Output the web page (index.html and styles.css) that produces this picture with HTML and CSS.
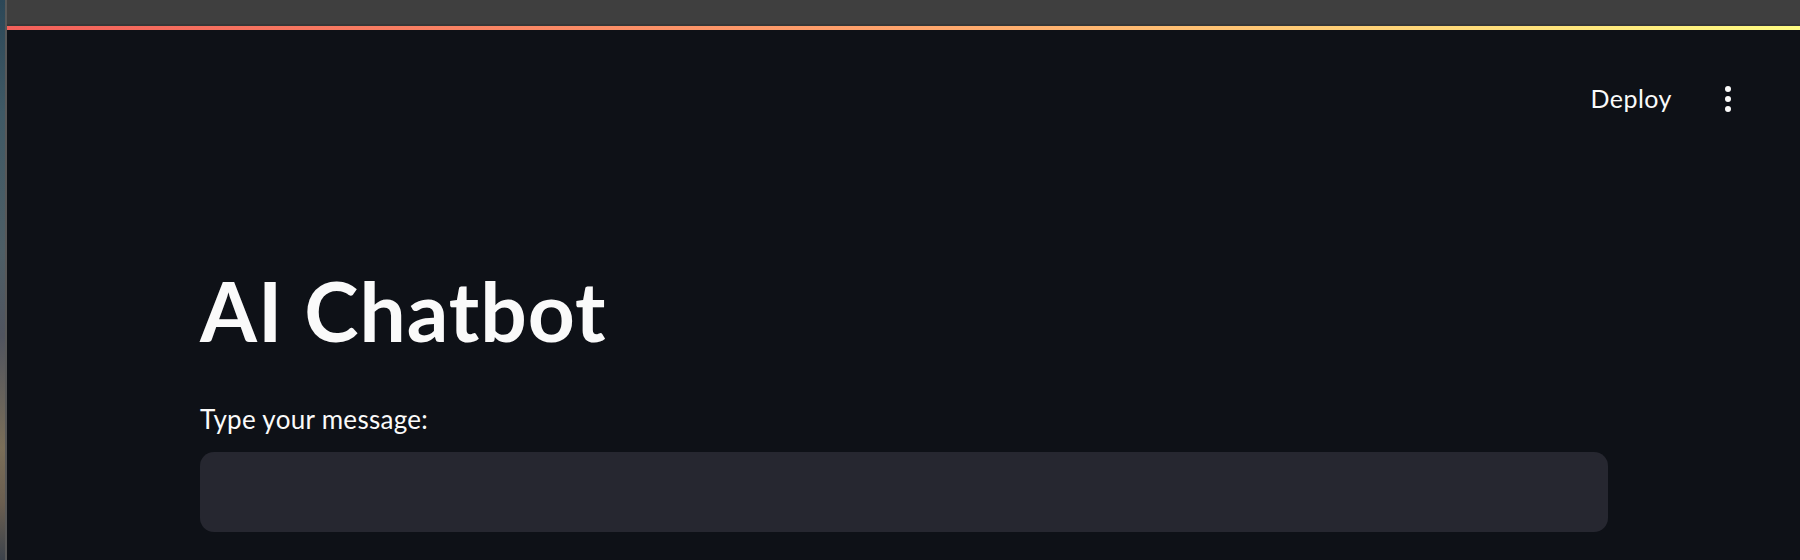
FILE: index.html
```html
<!DOCTYPE html>
<html lang="en">
<head>
<meta charset="utf-8">
<title>AI Chatbot</title>
<link rel="stylesheet" href="styles.css">
</head>
<body>
<div class="frame">
  <div class="desk"></div>
  <div class="edge"></div>
  <div class="window">
    <div class="titlebar"></div>
    <div class="titlebar-shade"></div>
    <div class="deco"></div>
    <div class="app">
      <header class="header">
        <span class="deploy">Deploy</span>
        <span class="menu" aria-label="Main menu">
          <span class="dot"></span><span class="dot"></span><span class="dot"></span>
        </span>
      </header>
      <main class="main">
        <h1 class="title">AI Chatbot</h1>
        <label class="label" for="msg">Type your message:</label>
        <div class="input" id="msg"></div>
      </main>
    </div>
  </div>
</div>
</body>
</html>
```

FILE: styles.css
```css
html, body {
  margin: 0;
  padding: 0;
  width: 1800px;
  height: 560px;
  overflow: hidden;
  background: #0e1117;
}

.frame {
  display: flex;
  height: 560px;
}

.desk {
  width: 5px;
  flex: none;
  background: linear-gradient(180deg, #2c4757 0%, #3f5965 20%, #4d5e66 45%, #50545f 60%, #7a6e58 80%, #6a5e50 90%, #3c434c 100%);
}

.edge {
  width: 2px;
  flex: none;
  background: #585858;
}

.window {
  flex: 1;
  display: flex;
  flex-direction: column;
  background: #0e1117;
}

.titlebar {
  height: 24px;
  background: #3f3f3f;
}

.titlebar-shade {
  height: 2px;
  background: #373737;
}

.deco {
  height: 4px;
  background: linear-gradient(90deg, #f3605a 0%, #ffa46c 50%, #fffc82 100%);
}

.app {
  flex: 1;
  font-family: "Lato", "Liberation Sans", sans-serif;
  color: #fafafa;
}

.header {
  height: 120px;
  box-sizing: border-box;
  padding: 53px 69px 0 0;
  display: flex;
  justify-content: flex-end;
  align-items: flex-start;
}

.deploy {
  font-size: 25px;
  line-height: 30px;
  font-weight: 400;
  letter-spacing: 0.5px;
  color: #fafafa;
}

.menu {
  margin-left: 53px;
  margin-top: 3px;
  display: flex;
  flex-direction: column;
  gap: 4px;
}

.dot {
  width: 6px;
  height: 6px;
  border-radius: 50%;
  background: #fafafa;
}

.main {
  padding: 111px 0 0 193px;
  display: flex;
  flex-direction: column;
  align-items: flex-start;
}

.title {
  margin: 0;
  font-size: 82px;
  line-height: 1.2;
  font-weight: 700;
  letter-spacing: 1px;
  color: #fafafa;
}

.label {
  margin-top: 45px;
  font-size: 26px;
  line-height: 1.2;
  letter-spacing: 0.3px;
  color: #fafafa;
}

.input {
  margin-top: 16px;
  width: 1408px;
  height: 80px;
  border-radius: 14px;
  background: #262730;
}
```
